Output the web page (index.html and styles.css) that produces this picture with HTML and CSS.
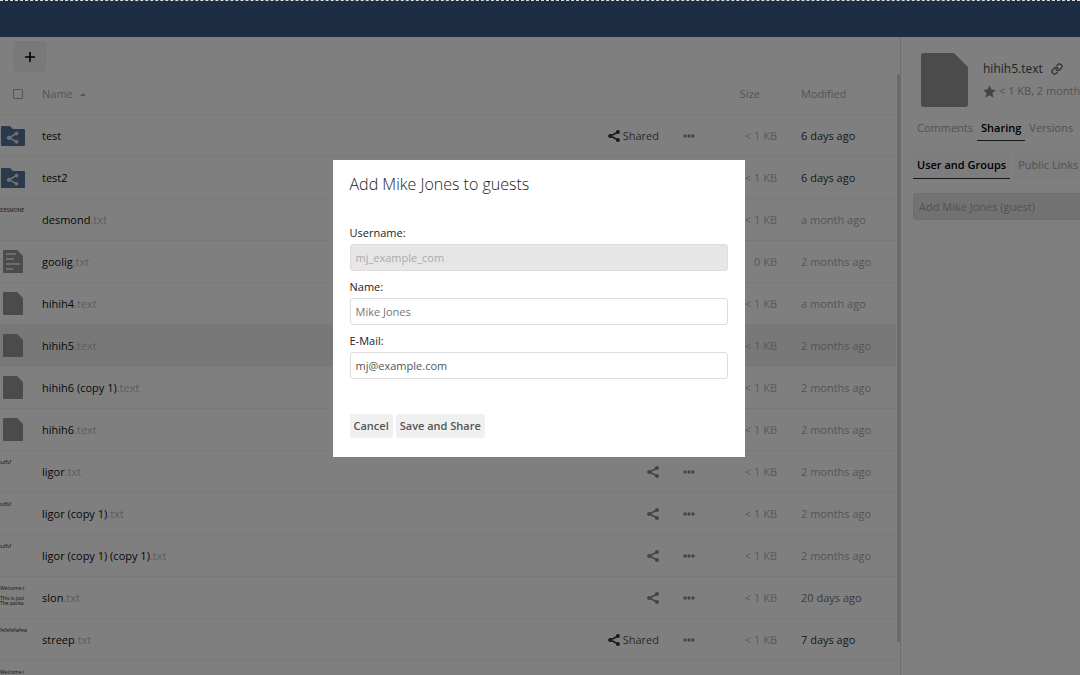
FILE: index.html
```
<!DOCTYPE html>
<html lang="en">
<head>
    <meta charset="UTF-8">
    <meta name="viewport" content="width=device-width, initial-scale=1.0">
    <title>Files</title>
    <link rel="stylesheet" href="styles.css">
</head>
<body>
    <svg class="sprite" aria-hidden="true">
        <symbol id="icon-share" viewBox="0 0 12 12">
            <path d="M9.8 2.2 2.2 6l7.6 3.8" fill="none" stroke="currentColor" stroke-width="1.6"/>
            <circle cx="2.1" cy="6" r="2"/>
            <circle cx="9.9" cy="2.1" r="2"/>
            <circle cx="9.9" cy="9.9" r="2"/>
        </symbol>
        <symbol id="icon-more" viewBox="0 0 12 4">
            <circle cx="2" cy="2" r="1.7"/>
            <circle cx="6" cy="2" r="1.7"/>
            <circle cx="10" cy="2" r="1.7"/>
        </symbol>
        <symbol id="icon-folder" viewBox="0 0 24 20">
            <path d="M1 0h8l3 3h11a1 1 0 0 1 1 1v15a1 1 0 0 1-1 1H1a1 1 0 0 1-1-1V1a1 1 0 0 1 1-1z" fill="#547594"/>
            <g fill="#d8e2ee" stroke="#d8e2ee">
                <path d="M15.500 7.500 8 11.800l7.500 4" fill="none" stroke-width="1.600"/>
                <circle cx="8" cy="11.800" r="1.700"/>
                <circle cx="15.500" cy="7.500" r="1.500"/>
                <circle cx="15.500" cy="15.800" r="1.500"/>
            </g>
        </symbol>
        <symbol id="icon-file" viewBox="0 0 20 23" preserveAspectRatio="none">
            <path d="M1 0h13l6 6v16a1 1 0 0 1-1 1H1a1 1 0 0 1-1-1V1a1 1 0 0 1 1-1z"/>
        </symbol>
        <symbol id="icon-text" viewBox="0 0 20 23">
            <path d="M1 0h13l6 6v16a1 1 0 0 1-1 1H1a1 1 0 0 1-1-1V1a1 1 0 0 1 1-1z"/>
            <path d="M3 4h10M3 9h8M3 14h14M3 19h7" stroke="#f4f4f4" stroke-width="1.500"/>
        </symbol>
    </svg>

    <header class="topbar"></header>

    <div class="app">
        <main class="files">
            <div class="controls">
                <button class="new-button" type="button" aria-label="New">
                    <svg viewBox="0 0 10 10"><path d="M5 0v10M0 5h10" stroke="#000" stroke-width="1.600"/></svg>
                </button>
            </div>

            <table class="filelist">
                <thead>
                    <tr>
                        <th class="thumb"><input type="checkbox" aria-label="Select all"></th>
                        <th class="name">Name <svg class="sort" viewBox="0 0 6 3"><path d="M0 3 3 0l3 3z"/></svg></th>
                        <th class="actions"></th>
                        <th class="size">Size</th>
                        <th class="modified">Modified</th>
                    </tr>
                </thead>
                <tbody>
                    <tr>
                        <td class="thumb"><svg class="folder"><use href="#icon-folder"/></svg></td>
                        <td class="name">test</td>
                        <td class="actions"><div class="action-row"><a class="shared" href="#"><svg class="share"><use href="#icon-share"/></svg>Shared</a><svg class="more"><use href="#icon-more"/></svg></div></td>
                        <td class="size">&lt; 1 KB</td>
                        <td class="modified recent">6 days ago</td>
                    </tr>
                    <tr>
                        <td class="thumb"><svg class="folder"><use href="#icon-folder"/></svg></td>
                        <td class="name">test2</td>
                        <td class="actions"><div class="action-row"><a class="shared" href="#"><svg class="share"><use href="#icon-share"/></svg>Shared</a><svg class="more"><use href="#icon-more"/></svg></div></td>
                        <td class="size">&lt; 1 KB</td>
                        <td class="modified recent">6 days ago</td>
                    </tr>
                    <tr>
                        <td class="thumb"><div class="preview">DESMONE</div></td>
                        <td class="name">desmond<span class="ext">.txt</span></td>
                        <td class="actions"><div class="action-row"><svg class="share"><use href="#icon-share"/></svg><svg class="more"><use href="#icon-more"/></svg></div></td>
                        <td class="size">&lt; 1 KB</td>
                        <td class="modified">a month ago</td>
                    </tr>
                    <tr>
                        <td class="thumb"><svg class="file"><use href="#icon-text"/></svg></td>
                        <td class="name">goolig<span class="ext">.txt</span></td>
                        <td class="actions"><div class="action-row"><svg class="share"><use href="#icon-share"/></svg><svg class="more"><use href="#icon-more"/></svg></div></td>
                        <td class="size">0 KB</td>
                        <td class="modified">2 months ago</td>
                    </tr>
                    <tr>
                        <td class="thumb"><svg class="file"><use href="#icon-file"/></svg></td>
                        <td class="name">hihih4<span class="ext">.text</span></td>
                        <td class="actions"><div class="action-row"><svg class="share"><use href="#icon-share"/></svg><svg class="more"><use href="#icon-more"/></svg></div></td>
                        <td class="size">&lt; 1 KB</td>
                        <td class="modified">a month ago</td>
                    </tr>
                    <tr class="selected">
                        <td class="thumb"><svg class="file"><use href="#icon-file"/></svg></td>
                        <td class="name">hihih5<span class="ext">.text</span></td>
                        <td class="actions"><div class="action-row"><svg class="share"><use href="#icon-share"/></svg><svg class="more"><use href="#icon-more"/></svg></div></td>
                        <td class="size">&lt; 1 KB</td>
                        <td class="modified">2 months ago</td>
                    </tr>
                    <tr>
                        <td class="thumb"><svg class="file"><use href="#icon-file"/></svg></td>
                        <td class="name">hihih6 (copy 1)<span class="ext">.text</span></td>
                        <td class="actions"><div class="action-row"><svg class="share"><use href="#icon-share"/></svg><svg class="more"><use href="#icon-more"/></svg></div></td>
                        <td class="size">&lt; 1 KB</td>
                        <td class="modified">2 months ago</td>
                    </tr>
                    <tr>
                        <td class="thumb"><svg class="file"><use href="#icon-file"/></svg></td>
                        <td class="name">hihih6<span class="ext">.text</span></td>
                        <td class="actions"><div class="action-row"><svg class="share"><use href="#icon-share"/></svg><svg class="more"><use href="#icon-more"/></svg></div></td>
                        <td class="size">&lt; 1 KB</td>
                        <td class="modified">2 months ago</td>
                    </tr>
                    <tr>
                        <td class="thumb"><div class="preview">sdfsf</div></td>
                        <td class="name">ligor<span class="ext">.txt</span></td>
                        <td class="actions"><div class="action-row"><svg class="share"><use href="#icon-share"/></svg><svg class="more"><use href="#icon-more"/></svg></div></td>
                        <td class="size">&lt; 1 KB</td>
                        <td class="modified">2 months ago</td>
                    </tr>
                    <tr>
                        <td class="thumb"><div class="preview">sdfsf</div></td>
                        <td class="name">ligor (copy 1)<span class="ext">.txt</span></td>
                        <td class="actions"><div class="action-row"><svg class="share"><use href="#icon-share"/></svg><svg class="more"><use href="#icon-more"/></svg></div></td>
                        <td class="size">&lt; 1 KB</td>
                        <td class="modified">2 months ago</td>
                    </tr>
                    <tr>
                        <td class="thumb"><div class="preview">sdfsf</div></td>
                        <td class="name">ligor (copy 1) (copy 1)<span class="ext">.txt</span></td>
                        <td class="actions"><div class="action-row"><svg class="share"><use href="#icon-share"/></svg><svg class="more"><use href="#icon-more"/></svg></div></td>
                        <td class="size">&lt; 1 KB</td>
                        <td class="modified">2 months ago</td>
                    </tr>
                    <tr>
                        <td class="thumb"><div class="preview">Welcome t<br><br>This is just<br>The packa</div></td>
                        <td class="name">slon<span class="ext">.txt</span></td>
                        <td class="actions"><div class="action-row"><svg class="share"><use href="#icon-share"/></svg><svg class="more"><use href="#icon-more"/></svg></div></td>
                        <td class="size">&lt; 1 KB</td>
                        <td class="modified older">20 days ago</td>
                    </tr>
                    <tr>
                        <td class="thumb"><div class="preview">fefefefwfewf</div></td>
                        <td class="name">streep<span class="ext">.txt</span></td>
                        <td class="actions"><div class="action-row"><a class="shared" href="#"><svg class="share"><use href="#icon-share"/></svg>Shared</a><svg class="more"><use href="#icon-more"/></svg></div></td>
                        <td class="size">&lt; 1 KB</td>
                        <td class="modified recent">7 days ago</td>
                    </tr>
                    <tr>
                        <td class="thumb"><div class="preview">Welcome t</div></td>
                        <td class="name"></td>
                        <td class="actions"></td>
                        <td class="size"></td>
                        <td class="modified"></td>
                    </tr>
                </tbody>
            </table>
            <div class="scrollbar"></div>
        </main>

        <aside class="details">
            <div class="file-info">
                <svg class="big-file"><use href="#icon-file"/></svg>
                <div class="file-text">
                    <div class="file-title">hihih5.text
                        <svg class="link" viewBox="0 0 24 24">
                            <g fill="none" stroke="currentColor" stroke-width="2.600" stroke-linecap="round">
                                <path d="M10 13a5 5 0 0 0 7.540.540l3-3a5 5 0 0 0-7.070-7.070l-1.720 1.710"/>
                                <path d="M14 11a5 5 0 0 0-7.540-.540l-3 3a5 5 0 0 0 7.070 7.070l1.710-1.710"/>
                            </g>
                        </svg>
                    </div>
                    <div class="file-meta">
                        <svg class="star" viewBox="0 0 12 12"><path d="m6 0 1.700 4.200 4.300.3-3.300 2.900 1.100 4.400L6 9.500l-3.800 2.300 1.100-4.400L0 4.500l4.300-.3z"/></svg>
                        &lt; 1 KB, 2 months
                    </div>
                </div>
            </div>
            <nav class="tabs">
                <a href="#">Comments</a>
                <a class="active" href="#">Sharing</a>
                <a href="#">Versions</a>
            </nav>
            <nav class="subtabs">
                <a class="active" href="#">User and Groups</a>
                <a href="#">Public Links</a>
            </nav>
            <input class="share-with" type="text" value="Add Mike Jones (guest)" aria-label="Share with" disabled>
        </aside>
    </div>

    <div class="overlay">
        <form class="dialog">
            <h2>Add Mike Jones to guests</h2>
            <label for="username">Username:</label>
            <input type="text" id="username" value="mj_example_com" disabled>
            <label for="name">Name:</label>
            <input type="text" id="name" placeholder="Mike Jones">
            <label for="email">E-Mail:</label>
            <input type="text" id="email" value="mj@example.com">
            <div class="buttons">
                <button type="button">Cancel</button>
                <button type="button">Save and Share</button>
            </div>
        </form>
    </div>
</body>
</html>
```
FILE: styles.css
```
* {
    box-sizing: border-box;
}

body {
    margin: 0;
    height: 100vh;
    display: flex;
    flex-direction: column;
    overflow: hidden;
    font-family: 'Open Sans', 'Liberation Sans', sans-serif;
    font-size: 11px;
    line-height: 16px;
    color: #222;
    background: #fff;
}

a {
    color: inherit;
    text-decoration: none;
}

svg {
    fill: currentColor;
}

.sprite {
    position: absolute;
    width: 0;
    height: 0;
}

.topbar {
    flex: 0 0 37px;
    background: #3b5a89;
}

.app {
    flex: 1;
    display: flex;
    min-height: 0;
}

/* file list */
.files {
    flex: 1;
    min-width: 0;
    position: relative;
    overflow: hidden;
    padding-right: 4px;
}

.controls {
    height: 37px;
    padding: 4px 14px;
}

.new-button {
    display: flex;
    align-items: center;
    justify-content: center;
    width: 32px;
    height: 31px;
    padding: 0;
    border: 1px solid #eee;
    border-radius: 3px;
    background: #f2f2f2;
}

.new-button svg {
    width: 10px;
    height: 10px;
}

.filelist {
    width: 100%;
    table-layout: fixed;
    border-collapse: separate;
    border-spacing: 0;
}

.filelist th,
.filelist td {
    height: 42px;
    padding: 0;
    border-bottom: 1px solid #f2f2f2;
    text-align: left;
    font-weight: normal;
    white-space: nowrap;
}

.filelist th {
    height: 41px;
    color: #aaa;
}

.filelist .thumb {
    width: 42px;
}

.filelist .thumb svg {
    display: block;
}

.filelist .actions {
    width: 96px;
}

.filelist .size {
    width: 82px;
    text-align: right;
    color: #b4b4b4;
}

.filelist th.size {
    padding-right: 17px;
    color: #aaa;
}

.filelist .modified {
    width: 119px;
    padding-left: 24px;
    color: #aaa;
}

.filelist .recent {
    color: #333;
}

.filelist .older {
    color: #777;
}

.filelist .selected td {
    background: #f0f0f0;
}

.thumb input {
    appearance: none;
    display: block;
    width: 10px;
    height: 10px;
    margin: 0 0 0 13px;
    border: 1px solid #aaa;
    border-radius: 1px;
}

.sort {
    width: 6px;
    height: 3px;
    margin: 0 0 2px 4px;
}

td.name {
    color: #111;
}

.ext {
    color: #bbb;
}

.folder {
    width: 24px;
    height: 20px;
    margin-left: 1px;
}

.file {
    width: 20px;
    height: 23px;
    margin-left: 3px;
    color: #969696;
}

.preview {
    width: 27px;
    height: 28px;
    overflow: hidden;
    padding-top: 2px;
    font-size: 5px;
    line-height: 5px;
}

.action-row {
    display: flex;
    align-items: center;
    justify-content: flex-end;
    gap: 24px;
    color: #888;
}

.share {
    width: 12px;
    height: 12px;
}

.more {
    width: 12px;
    height: 4px;
}

.shared {
    display: flex;
    align-items: center;
    gap: 3px;
    color: #555;
}

.shared .share {
    color: #333;
}

.scrollbar {
    position: absolute;
    top: 37px;
    right: 0;
    width: 3px;
    height: 89%;
    background: #d4d4d4;
    border-radius: 2px;
}

/* right sidebar */
.details {
    flex: 0 0 180px;
    overflow: hidden;
    border-left: 1px solid #ddd;
    padding: 16px 0 0 12px;
    white-space: nowrap;
    color: #a4a4a4;
}

.file-info {
    display: flex;
    gap: 15px;
    padding-left: 8px;
}

.big-file {
    flex: none;
    width: 47px;
    height: 54px;
    color: #969696;
}

.file-title {
    display: flex;
    align-items: center;
    gap: 8px;
    padding-top: 6px;
    font-size: 12px;
    line-height: 20px;
    color: #444;
}

.link {
    width: 12px;
    height: 12px;
    color: #666;
}

.file-meta {
    display: flex;
    align-items: center;
    gap: 3px;
    line-height: 24px;
}

.star {
    width: 13px;
    height: 13px;
    color: #888;
}

.tabs,
.subtabs {
    display: flex;
}

.tabs {
    margin-top: 9px;
}

.tabs a {
    padding: 4px;
    border-bottom: 1px solid transparent;
}

.subtabs {
    gap: 4px;
    margin-top: 11px;
}

.subtabs a {
    padding: 5px 4px;
    border-bottom: 1px solid transparent;
    background: #fafafa;
}

.tabs .active,
.subtabs .active {
    font-weight: 600;
    color: #000;
    border-bottom-color: #333;
}

.share-with {
    display: block;
    width: 240px;
    height: 27px;
    margin-top: 14px;
    padding: 0 5px;
    border: 1px solid #ddd;
    border-radius: 3px;
    background: #e4e4e4;
    font: inherit;
    color: #a4a4a4;
}

/* guest dialog */
.overlay {
    position: fixed;
    inset: 0;
    display: flex;
    align-items: flex-start;
    justify-content: center;
    padding: 159px 3px 0 0;
    border-top: 1px dashed #ddd;
    background: rgba(0, 0, 0, 0.5);
}

.dialog {
    width: 412px;
    padding: 12px 17px 19px;
    background: #fff;
}

.dialog h2 {
    margin: 0 0 28px;
    font-size: 16px;
    font-weight: 300;
    line-height: 24px;
}

.dialog label {
    display: block;
    line-height: 18px;
}

.dialog input {
    display: block;
    width: 100%;
    height: 27px;
    margin: 2px 0 7px;
    padding: 0 5px;
    border: 1px solid #ddd;
    border-radius: 3px;
    background: #fff;
    font: inherit;
    color: #555;
}

.dialog input::placeholder {
    color: #777;
}

.dialog input:disabled {
    background: #e6e6e6;
    color: #aaa;
}

.buttons {
    display: flex;
    gap: 3px;
    margin-top: 35px;
}

.buttons button {
    height: 24px;
    padding: 0 3px;
    border: 1px solid #f0f0f0;
    border-radius: 2px;
    background: #f0f0f0;
    font: inherit;
    font-weight: 600;
    color: #555;
}
```
